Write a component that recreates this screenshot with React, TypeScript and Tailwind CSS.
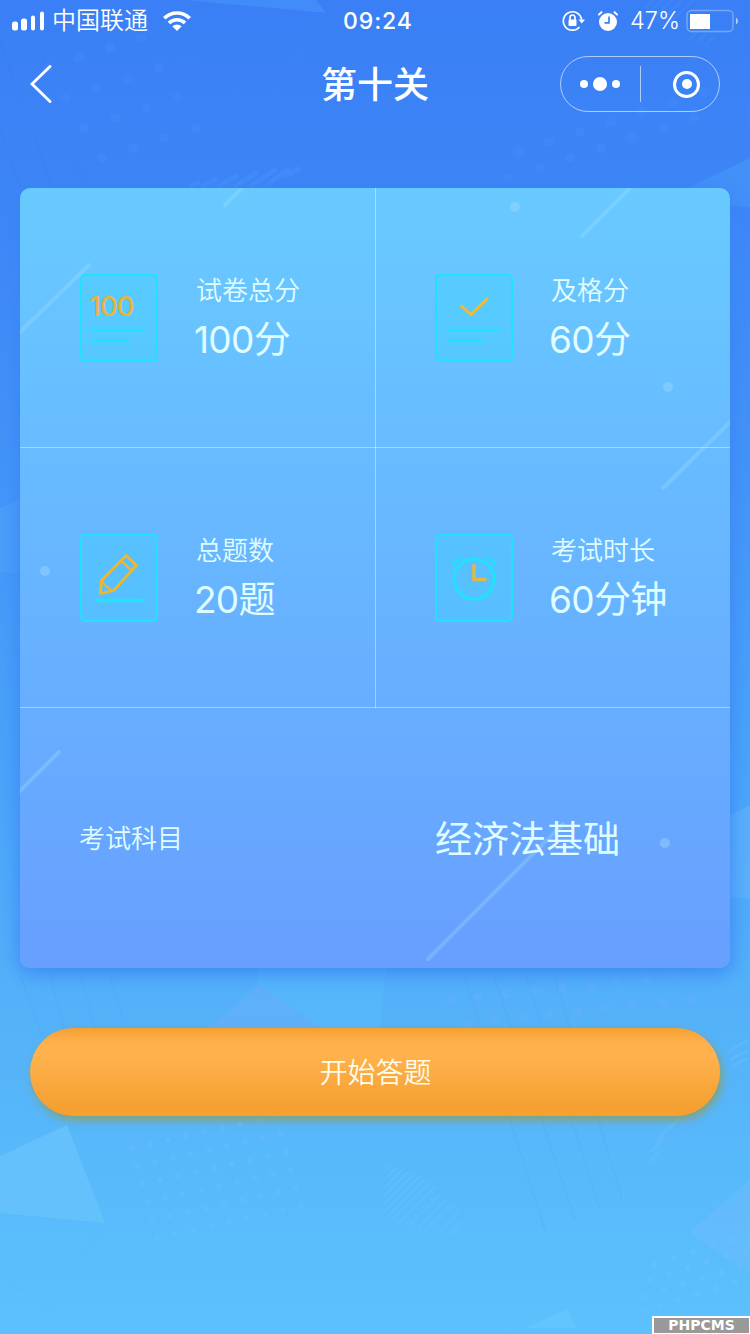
import React from "react";

const TITLE_FONT = "font-['Inter','Noto_Sans_CJK_SC',sans-serif]";

const dots = (x: number, y: number, cols: number, rows: number, dx: number, dy: number, skewX: number, skewY: number) =>
    Array.from({ length: cols * rows }, (_, i) => {
        const c = i % cols;
        const r = Math.floor(i / cols);
        return { x: x + c * dx + r * skewX, y: y + r * dy + c * skewY };
    });

const dotFields = [
    { r: 5, fill: "#4f90fa", opacity: 0.28, items: dots(48, 68, 4, 4, 31, 30, 18, -10) },
    { r: 5, fill: "#4f90fa", opacity: 0.25, items: dots(508, 178, 7, 2, 31, -26, 10, -10) },
    { r: 4.5, fill: "#6fb0ff", opacity: 0.3, items: dots(450, 1000, 9, 2, 28, 23, 16, -3) },
    { r: 2.8, fill: "#7cc0fc", opacity: 0.25, items: dots(132, 1148, 9, 6, 18, 18, 5, -4) },
    { r: 3, fill: "#7ac4ff", opacity: 0.25, items: dots(640, 1312, 6, 4, 19, -16, 5, -6) },
];

function Backdrop() {
    return <svg className="absolute inset-0 w-full h-full" viewBox="0 0 750 1334" fill="none">
        <path d="M185 0H316L326 13Z" fill="#4592f9" opacity=".7" />
        <path d="M120 13 262 111 324 14" stroke="#5794fa" opacity=".2" />
        <path d="M690 187 750 158V207L729 205Z" fill="#4694f9" opacity=".7" />
        <path d="M0 508 20 500V574L0 572Z" fill="#4fa0fa" opacity=".7" />
        <path d="M730 815 750 805V899L730 897Z" fill="#62b6fb" opacity=".6" />
        <path d="M210 1028 258 984 320 1028Z" fill="#67aefb" opacity=".55" />
        <path d="M258 968H386L380 1028H320L258 984Z" fill="#58bbfb" opacity=".5" />
        <path d="M0 1156 67 1125 105 1223 0 1213Z" fill="#69c5fb" opacity=".7" />
        <path d="M105 1223 48 1310 0 1275" stroke="#4fb0f5" opacity=".15" />
        <path d="M689 1233 750 1179V1272Z" fill="#69bcfb" opacity=".65" />
        <path d="M525 1328 568 1309 576 1328Z" fill="#6bcaff" opacity=".5" />
        <g stroke="#3276ea" opacity=".18">
            <path d="M0 40 52 187M30 20 85 187M0 125 20 187" />
        </g>
        <g stroke="#3f94ee" opacity=".1" strokeWidth="2">
            <path d="M20 975 42 1035M50 975 64 1028M80 975 95 1028M110 975 123 1020M464 975 545 1230M494 975 575 1220M526 975 600 1210M554 975 622 1198" />
        </g>
        <g stroke="#4896fa" opacity=".4" strokeWidth="5">
            <path d="m190 187 10-5m2 5 16-9m0 9 20-12m-4 12 24-15m-8 15 26-18m-8 15 22-16m-6 9 16-9" />
        </g>
        <g stroke="#4593fa" opacity=".35" strokeWidth="2">
            <path d="m645 8 7-8m-2 12 12-12m-6 16 16-16m-9 19 19-19m-12 23 23-23m-4 40 9-9m-1 12 9-9m-1 12 9-9" />
        </g>
        <g stroke="#6cc9fc" opacity=".35" strokeWidth="1.500">
            <path d="m386 1170 4-4m-4 12 10-10m-10 18 16-16m-16 24 22-22m-22 30 28-28m-28 36 34-34m-34 42 38-38m-34 42 40-40m-32 42 38-38m-28 40 34-34m-24 36 28-28m-20 31 26-26m-15 29 22-22m-10 23 14-14" />
        </g>
        <g stroke="#72c4fb" opacity=".3" strokeWidth="3">
            <path d="m650 1162 8-10m-7 0 14-16m-8 4 16-18m-4 8 14-16m44-62 21-12m-18 20 18-10m-15 16 15-8" />
        </g>
        {dotFields.map((field, i) => (
            <g key={i} fill={field.fill} opacity={field.opacity}>
                {field.items.map((d, j) => <circle key={j} cx={d.x} cy={d.y} r={field.r} />)}
            </g>
        ))}
    </svg>
}

function StatusBar() {
    return <div className="relative h-10 grid grid-cols-[343px_1fr_auto] items-center text-white">
        <div className="flex items-center pl-3">
            <svg className="w-8 h-5" viewBox="0 0 32 20" fill="currentColor">
                <rect x="0" y="10.500" width="6" height="9" rx="2.5" />
                <rect x="9" y="7.500" width="6" height="12" rx="2.5" />
                <rect x="19" y="4.500" width="4" height="15" rx="2" />
                <rect x="28" y="0.500" width="4" height="19" rx="2" />
            </svg>
            <span className="pt-px ml-2 text-[24px] leading-10 font-[350]">中国联通</span>
            <svg className="ml-[15px] w-7 h-5" viewBox="0 0 28 20">
                <g fill="none" stroke="currentColor" strokeWidth="3.600">
                    <path d="M1.300 7.200a18 18 0 0 1 25.400 0" />
                    <path d="M6 12a11.500 11.500 0 0 1 16 0" />
                </g>
                <path d="M14 20 9.300 15.300a6.800 6.800 0 0 1 9.400 0Z" fill="currentColor" />
            </svg>
        </div>
        <span className="pt-px text-[23px] leading-10 font-medium tracking-[0.9px]">09:24</span>
        <div className="flex items-center pr-[11px]">
            <svg className="w-6 h-[22px]" viewBox="0 0 24 22" fill="none" stroke="currentColor" strokeWidth="1.700">
                <path d="M19.600 9.500A9.200 9.200 0 1 0 17.500 17" />
                <path d="M16.500 9.500h6.500l-3.200 4Z" fill="currentColor" stroke="none" />
                <rect x="6.500" y="9.500" width="8" height="6.500" rx="1" fill="currentColor" stroke="none" />
                <path d="M8 10V7.500a2.500 2.500 0 0 1 5 0V10" />
            </svg>
            <svg className="ml-3 w-5 h-[22px]" viewBox="0 0 20 22" fill="none" stroke="currentColor">
                <circle cx="10" cy="12" r="9" fill="currentColor" stroke="none" />
                <path d="M1 4.500 3.500 2.200M19 4.500 16.500 2.200" strokeWidth="2" strokeLinecap="round" />
                <path d="M11 6.500v6.300H6.500" stroke="#3a80f5" strokeWidth="1.700" />
            </svg>
            <span className="pt-px ml-3 text-[23.500px] leading-10 font-light">47%</span>
            <svg className="ml-1.5 w-[53px] h-6" viewBox="0 0 53 24" fill="none">
                <rect x="1" y="1.500" width="46" height="21" rx="4.500" stroke="#73a6f9" strokeWidth="1.500" />
                <rect x="4" y="5" width="20" height="15" fill="#fff" />
                <path d="M50 8.500v7q2-1.500 2-3.500T50 8.500Z" fill="#b5cffd" />
            </svg>
        </div>
    </div>
}

function NavBar() {
    return <div className="relative h-[88px] px-[30px] grid grid-cols-3 items-center text-white">
        <svg className="w-[22px] h-[38px]" viewBox="0 0 22 38" fill="none" stroke="currentColor" strokeWidth="2.800" strokeLinecap="round">
            <path d="M20 1.500 2 19 20 36.500" />
        </svg>
        <h1 className="pt-0.5 text-center text-[36px] leading-[52px] font-medium">第十关</h1>
        <div className="justify-self-end w-40 h-14 rounded-full border border-white/60 flex items-center">
            <div className="w-[79px] pr-0.5 flex items-center justify-center gap-[5px]">
                <i className="size-2 rounded-full bg-white" />
                <i className="size-3.5 rounded-full bg-white" />
                <i className="size-2 rounded-full bg-white" />
            </div>
            <div className="w-px h-9 bg-white/60" />
            <div className="ml-8 size-[27px] rounded-full border-[3.500px] border-white flex items-center justify-center">
                <i className="size-2.5 rounded-full bg-white" />
            </div>
        </div>
    </div>
}

function Sheet({ children }: { children: React.ReactNode }) {
    return <svg className="w-[78px] h-[88px] shrink-0" viewBox="0 0 78 88" fill="none" strokeLinecap="round">
        <rect x="1" y="1" width="76" height="86" rx="4" fill="#3ad8ff" fillOpacity=".35" stroke="#20e2fb" strokeWidth="2" />
        {children}
    </svg>
}

const Lines = () => <path d="M13 56h51M13 67h35" stroke="#20e2fb" strokeWidth="2.500" />;

const stats = [
    {
        label: "试卷总分", value: "100分", icon: <Sheet>
            <text x="9.500" y="42" fontSize="27.500" fontWeight="500" fill="#e8b33d" textLength="45">100</text>
            <Lines />
        </Sheet>
    },
    {
        label: "及格分", value: "60分", icon: <Sheet>
            <path d="m26.500 32 9.500 8.500L52 25" stroke="#f6b92e" strokeWidth="3" />
            <Lines />
        </Sheet>
    },
    {
        label: "总题数", value: "20题", icon: <Sheet>
            <g stroke="#f0b62f" strokeWidth="2.800" strokeLinejoin="round">
                <path d="M46 21.500 56.500 31.500 33.500 56.500 20.500 59.500 21.500 46.500Z" />
                <path d="M41 26.500 51.500 36.500" strokeWidth="2.200" />
                <path d="M22.500 47.500 24.500 50.500 32 57" strokeWidth="2" />
            </g>
            <path d="M17 66.500h46" stroke="#20e2fb" strokeWidth="3.500" />
        </Sheet>
    },
    {
        label: "考试时长", value: "60分钟", icon: <Sheet>
            <circle cx="39" cy="45" r="20" stroke="#20e2fb" strokeWidth="3" />
            <path d="m17.500 30.500 7.500-7M60.500 30.500l-7.500-7" stroke="#20e2fb" strokeWidth="3" strokeLinecap="butt" />
            <path d="M39 31.500V45.500h11" stroke="#e0b748" strokeWidth="3.500" />
        </Sheet>
    },
];

function CardLines() {
    return <svg className="absolute inset-0 w-full h-full" viewBox="0 0 710 780" fill="none">
        <g stroke="#a9e3ff" opacity=".28" strokeWidth="4" strokeLinecap="round">
            <path d="M-4 148 69 77M205 17 226-4M562 48 614-4M643 300 714 230M-4 607 39 564M408 771 543 636" />
        </g>
        <g fill="#a2dcff" opacity=".4">
            <circle cx="495" cy="19" r="5" />
            <circle cx="648" cy="199" r="5" />
            <circle cx="25" cy="383" r="5" />
            <circle cx="645" cy="655" r="5" />
        </g>
    </svg>
}

export default function App() {
    return <main className={`relative w-[750px] h-[1334px] overflow-hidden bg-[linear-gradient(180deg,#3a7ff5_0%,#3d86f7_15%,#4496f8_38%,#4ba6f9_60%,#54b1f9_75%,#5cc1fc_100%)] ${TITLE_FONT}`}>
        <Backdrop />
        <StatusBar />
        <NavBar />

        <section className="relative mt-15 mx-5 h-[780px] rounded-[10px] overflow-hidden bg-linear-to-b from-[#68caff] to-[#679fff] shadow-[0_4px_20px_#3a83f5]">
            <CardLines />
            <div className="relative grid grid-cols-2">
                {stats.map((s, i) => (
                    <div key={s.label} className={`h-[260px] flex items-center pl-[60px] border-b border-white/40 ${i % 2 === 0 ? "w-[356px] border-r" : ""}`}>
                        {s.icon}
                        <div className="ml-[37px] pt-[3px] text-[#e0fdff]">
                            <p className="text-[26px] leading-[38px] font-[350] pl-px">{s.label}</p>
                            <p className="-ml-px mt-[3px] text-[37px] leading-[54px] tracking-[-0.700px]">{s.value}</p>
                        </div>
                    </div>
                ))}
            </div>
            <div className="relative h-[260px] pt-px grid grid-cols-2 items-center text-[#e0fdff]">
                <p className="pl-[59px] text-[26px] font-[350]">考试科目</p>
                <p className="pl-[60px] pt-0.5 text-[37px]">经济法基础</p>
            </div>
        </section>

        <button className="relative block mt-15 mx-[30px] w-[690px] h-22 pt-px pl-px rounded-full bg-[linear-gradient(180deg,#f5a031_0%,#feb04b_16%,#ffb24e_30%,#f5a031_90%)] text-[28px] font-[350] text-[#fffbe9] shadow-[2px_4px_8px_rgba(160,150,50,.7)]">
            开始答题
        </button>

        <div className="absolute right-0 bottom-0 w-[98px] h-[18px] border-2 border-r-1 border-b-1 border-white bg-[#999] flex items-center justify-center pb-px font-['DejaVu_Sans',sans-serif] font-bold text-[14px] leading-none text-white">
            PHPCMS
        </div>
    </main>
}
